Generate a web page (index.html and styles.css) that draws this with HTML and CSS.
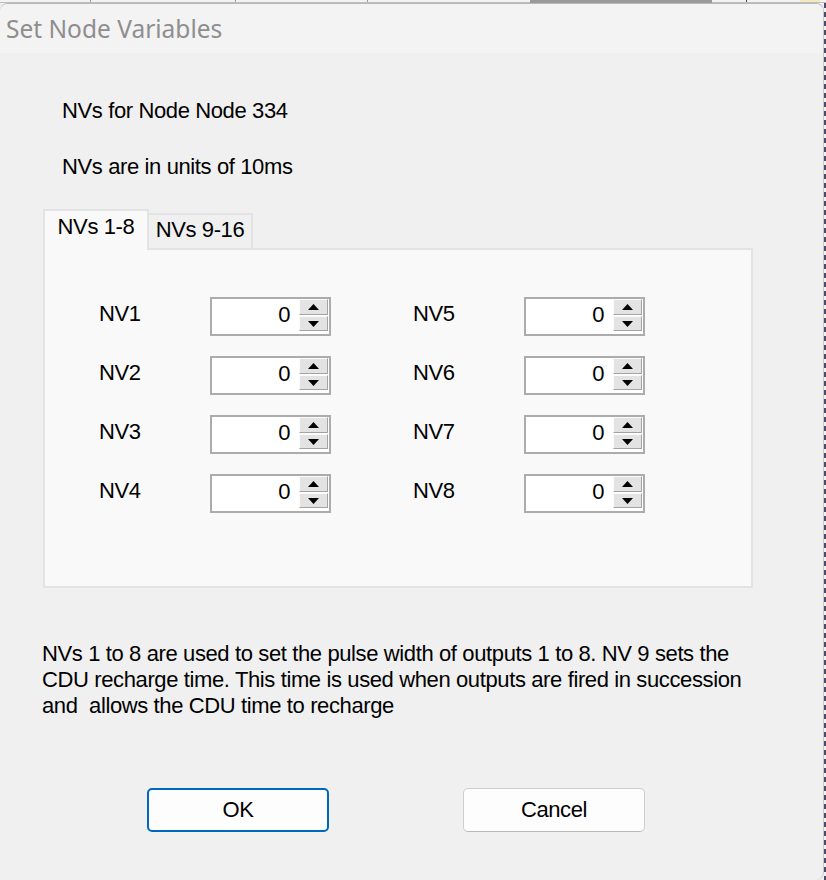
FILE: index.html
```html
<!DOCTYPE html>
<html lang="en">
<head>
<meta charset="utf-8">
<title>Set Node Variables</title>
<link rel="stylesheet" href="styles.css">
</head>
<body>
<div class="screen">
  <div class="backdrop-top"></div>
  <div class="stage">
    <div class="window">
      <div class="titlebar"><span class="title">Set Node Variables</span></div>
      <div class="client">
        <p class="info first">NVs for Node Node 334</p>
        <p class="info second">NVs are in units of 10ms</p>
        <div class="tabctl">
          <div class="tabstrip">
            <div class="tab active">NVs 1-8</div>
            <div class="tab">NVs 9-16</div>
            <div class="tab-fill"></div>
          </div>
          <div class="panel">
            <div class="nv-grid">
              <div class="nv-col">
                <div class="nv-row"><span class="nv-label">NV1</span><div class="spin"><span class="spin-val">0</span><span class="spin-btns"><span class="spin-btn up"><svg width="11" height="6" viewBox="0 0 11 6"><polygon points="0,6 11,6 5.5,0" fill="#000"/></svg></span><span class="spin-btn down"><svg width="11" height="6" viewBox="0 0 11 6"><polygon points="0,0 11,0 5.5,6" fill="#000"/></svg></span></span></div></div>
                <div class="nv-row"><span class="nv-label">NV2</span><div class="spin"><span class="spin-val">0</span><span class="spin-btns"><span class="spin-btn up"><svg width="11" height="6" viewBox="0 0 11 6"><polygon points="0,6 11,6 5.5,0" fill="#000"/></svg></span><span class="spin-btn down"><svg width="11" height="6" viewBox="0 0 11 6"><polygon points="0,0 11,0 5.5,6" fill="#000"/></svg></span></span></div></div>
                <div class="nv-row"><span class="nv-label">NV3</span><div class="spin"><span class="spin-val">0</span><span class="spin-btns"><span class="spin-btn up"><svg width="11" height="6" viewBox="0 0 11 6"><polygon points="0,6 11,6 5.5,0" fill="#000"/></svg></span><span class="spin-btn down"><svg width="11" height="6" viewBox="0 0 11 6"><polygon points="0,0 11,0 5.5,6" fill="#000"/></svg></span></span></div></div>
                <div class="nv-row"><span class="nv-label">NV4</span><div class="spin"><span class="spin-val">0</span><span class="spin-btns"><span class="spin-btn up"><svg width="11" height="6" viewBox="0 0 11 6"><polygon points="0,6 11,6 5.5,0" fill="#000"/></svg></span><span class="spin-btn down"><svg width="11" height="6" viewBox="0 0 11 6"><polygon points="0,0 11,0 5.5,6" fill="#000"/></svg></span></span></div></div>
              </div>
              <div class="nv-col">
                <div class="nv-row"><span class="nv-label">NV5</span><div class="spin"><span class="spin-val">0</span><span class="spin-btns"><span class="spin-btn up"><svg width="11" height="6" viewBox="0 0 11 6"><polygon points="0,6 11,6 5.5,0" fill="#000"/></svg></span><span class="spin-btn down"><svg width="11" height="6" viewBox="0 0 11 6"><polygon points="0,0 11,0 5.5,6" fill="#000"/></svg></span></span></div></div>
                <div class="nv-row"><span class="nv-label">NV6</span><div class="spin"><span class="spin-val">0</span><span class="spin-btns"><span class="spin-btn up"><svg width="11" height="6" viewBox="0 0 11 6"><polygon points="0,6 11,6 5.5,0" fill="#000"/></svg></span><span class="spin-btn down"><svg width="11" height="6" viewBox="0 0 11 6"><polygon points="0,0 11,0 5.5,6" fill="#000"/></svg></span></span></div></div>
                <div class="nv-row"><span class="nv-label">NV7</span><div class="spin"><span class="spin-val">0</span><span class="spin-btns"><span class="spin-btn up"><svg width="11" height="6" viewBox="0 0 11 6"><polygon points="0,6 11,6 5.5,0" fill="#000"/></svg></span><span class="spin-btn down"><svg width="11" height="6" viewBox="0 0 11 6"><polygon points="0,0 11,0 5.5,6" fill="#000"/></svg></span></span></div></div>
                <div class="nv-row"><span class="nv-label">NV8</span><div class="spin"><span class="spin-val">0</span><span class="spin-btns"><span class="spin-btn up"><svg width="11" height="6" viewBox="0 0 11 6"><polygon points="0,6 11,6 5.5,0" fill="#000"/></svg></span><span class="spin-btn down"><svg width="11" height="6" viewBox="0 0 11 6"><polygon points="0,0 11,0 5.5,6" fill="#000"/></svg></span></span></div></div>
              </div>
            </div>
          </div>
        </div>
        <p class="desc">NVs 1 to 8 are used to set the pulse width of outputs 1 to 8. NV 9 sets the<br>CDU recharge time. This time is used when outputs are fired in succession<br>and&nbsp; allows the CDU time to recharge</p>
        <div class="actions">
          <button class="btn default" type="button">OK</button>
          <button class="btn" type="button">Cancel</button>
        </div>
      </div>
    </div>
    <div class="edge"></div>
  </div>
</div>
</body>
</html>
```
FILE: styles.css
```css
html, body {
  margin: 0;
  padding: 0;
}

body {
  width: 826px;
  height: 880px;
  overflow: hidden;
  background: #f0f0f0;
  font-family: "Liberation Sans", Arial, sans-serif;
  font-size: 22px;
  letter-spacing: -0.38px;
  color: #000;
}

.screen {
  display: flex;
  flex-direction: column;
  width: 826px;
  height: 880px;
}

.backdrop-top {
  height: 3px;
  flex: none;
  background:
    linear-gradient(#bdbdbd, #bdbdbd) 0 2px / 530px 1px no-repeat,
    linear-gradient(#999, #999) 530px 0 / 182px 3px no-repeat,
    linear-gradient(#bdbdbd, #bdbdbd) 712px 2px / 114px 1px no-repeat,
    linear-gradient(#9a9a9a, #9a9a9a) 90px 0 / 1px 3px no-repeat,
    linear-gradient(#9a9a9a, #9a9a9a) 235px 0 / 1px 3px no-repeat,
    linear-gradient(#9a9a9a, #9a9a9a) 367px 0 / 1px 3px no-repeat,
    linear-gradient(#444, #444) 746px 0 / 1px 3px no-repeat,
    linear-gradient(#f2e9c0, #f2e9c0) 800px 0 / 20px 3px no-repeat,
    #f2f2f2;
}

.stage {
  display: flex;
  flex: 1;
}

.window {
  width: 824px;
  height: 877px;
  box-sizing: border-box;
  border-top: 1px solid #b8b8b8;
  border-right: 1px solid #c8c8c8;
  border-radius: 8px;
  background: #f0f0f0;
  overflow: hidden;
  display: flex;
  flex-direction: column;
}

.edge {
  width: 2px;
  flex: none;
  background: repeating-linear-gradient(#4b4b66 0 5px, #f0f0f0 5px 9px);
}

.titlebar {
  height: 49px;
  flex: none;
  background: #f3f3f3;
  padding-left: 6px;
  line-height: 50px;
  box-sizing: border-box;
}

.title {
  font-family: "Noto Sans", "Open Sans", sans-serif;
  font-size: 24.5px;
  letter-spacing: 0;
  color: #8e8e8e;
}

.client {
  flex: 1;
  display: flex;
  flex-direction: column;
  padding-top: 45px;
}

.info {
  margin: 0 0 0 62px;
  line-height: 26px;
}

.info.second {
  margin-top: 30px;
}

.tabctl {
  margin: 29px 0 0 43px;
  width: 710px;
}

.tabstrip {
  display: flex;
  align-items: flex-end;
  height: 41px;
}

.tab {
  box-sizing: border-box;
  text-align: center;
  line-height: 26px;
  white-space: nowrap;
  border: 2px solid #e3e3e3;
}

.tab.active {
  width: 106px;
  height: 41px;
  padding-top: 3px;
  border-bottom: none;
  background: #f9f9f9;
}

.tab:not(.active) {
  width: 104px;
  height: 37px;
  padding-top: 2px;
  border-left: none;
  background: #f0f0f0;
}

.tab-fill {
  flex: 1;
  height: 2px;
  background: #e3e3e3;
}

.panel {
  box-sizing: border-box;
  height: 338px;
  background: #f9f9f9;
  border: 2px solid #e3e3e3;
  border-top: none;
  padding: 47px 0 0 54px;
}

.nv-grid {
  display: flex;
  gap: 82px;
}

.nv-col {
  display: flex;
  flex-direction: column;
  gap: 20px;
}

.nv-row {
  display: flex;
  align-items: flex-start;
}

.nv-label {
  width: 111px;
  padding-top: 4px;
  line-height: 26px;
}

.spin {
  width: 121px;
  height: 39px;
  box-sizing: border-box;
  border: 2px solid #acacac;
  background: #fff;
  display: flex;
  align-items: flex-start;
}

.spin-val {
  flex: 1;
  text-align: right;
  padding-right: 9px;
  padding-top: 3px;
  line-height: 26px;
}

.spin-btns {
  display: flex;
  flex-direction: column;
  gap: 1px;
  width: 29px;
  margin-right: 1px;
}

.spin-btn {
  box-sizing: border-box;
  display: flex;
  align-items: center;
  justify-content: center;
  background: #e3e3e3;
  border: 1px solid;
  border-color: #fbfbfb #a3a3a3 #a3a3a3 #fbfbfb;
}

.spin-btn.up {
  height: 16px;
}

.spin-btn.down {
  height: 15px;
}

.spin-btn svg {
  display: block;
}

.desc {
  margin: 53px 0 0 42px;
  line-height: 26px;
}

.actions {
  display: flex;
  gap: 134px;
  margin: 69px 0 0 147px;
}

.btn {
  width: 182px;
  height: 44px;
  box-sizing: border-box;
  background: #fdfdfd;
  border: 1px solid #cecece;
  border-bottom-color: #b9b9b9;
  border-radius: 5px;
  font-family: inherit;
  font-size: 22px;
  letter-spacing: -0.38px;
  color: #000;
  padding: 0;
  line-height: 40px;
}

.btn.default {
  border: 2px solid #0067c0;
}
```
